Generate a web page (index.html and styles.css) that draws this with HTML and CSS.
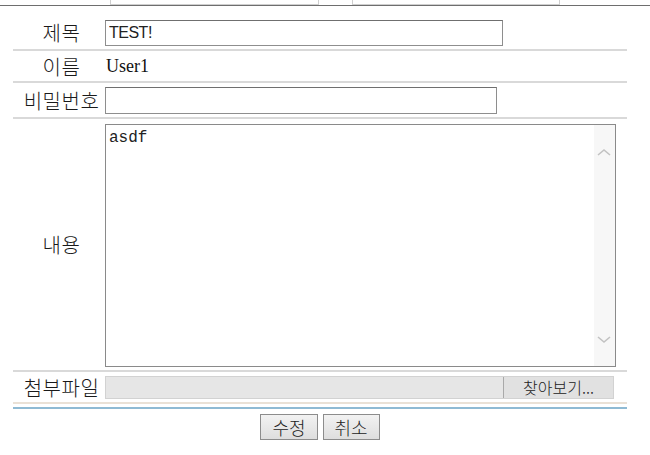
FILE: index.html
```html
<!DOCTYPE html>
<html lang="ko">
<head>
    <meta charset="UTF-8">
    <meta name="viewport" content="width=device-width, initial-scale=1.0">
    <title>글 수정</title>
    <link rel="stylesheet" href="styles.css">
</head>
<body>
    <div class="top-strip">
        <div class="top-box top-box-1"></div>
        <div class="top-box top-box-2"></div>
    </div>

    <form class="board-form" onsubmit="return false">
        <div class="row">
            <label class="label">제목</label>
            <div class="field"><input type="text" class="input input-title" value="TEST!"></div>
        </div>
        <div class="row row-name">
            <span class="label">이름</span>
            <div class="field"><span class="name-text">User1</span></div>
        </div>
        <div class="row">
            <label class="label">비밀번호</label>
            <div class="field"><input type="password" class="input input-pass"></div>
        </div>
        <div class="row">
            <label class="label">내용</label>
            <div class="field">
                <div class="content-box">
                    <textarea class="content-text">asdf</textarea>
                    <div class="scrollbar">
                        <svg width="20" height="12" viewBox="0 0 20 12"><path d="M4 9 L10 4 L16 9" fill="none" stroke="#c2c2c2" stroke-width="1.6"/></svg>
                        <svg width="20" height="12" viewBox="0 0 20 12"><path d="M4 3 L10 8 L16 3" fill="none" stroke="#c2c2c2" stroke-width="1.6"/></svg>
                    </div>
                </div>
            </div>
        </div>
        <div class="row row-file">
            <label class="label">첨부파일</label>
            <div class="field">
                <div class="file-box">
                    <span class="file-name"></span>
                    <button type="button" class="file-btn">찾아보기...</button>
                </div>
            </div>
        </div>

        <div class="actions">
            <button type="button" class="btn">수정</button>
            <button type="button" class="btn">취소</button>
        </div>
    </form>
</body>
</html>
```

FILE: styles.css
```css
* {
    margin: 0;
    padding: 0;
    box-sizing: border-box;
}

body {
    font-family: "Noto Sans CJK KR", "Liberation Sans", sans-serif;
    background: #fff;
    color: #222;
    width: 650px;
}

.top-strip {
    height: 6px;
    border-bottom: 1px solid #6e6e6e;
    display: flex;
    margin-bottom: 10px;
}

.top-box {
    height: 5px;
    border: 1px solid #cfcfcf;
    border-top: none;
}

.top-box-1 {
    width: 209px;
    margin-left: 110px;
}

.top-box-2 {
    width: 208px;
    margin-left: 33px;
}

.board-form {
    width: 614px;
    margin-left: 13px;
}

.row {
    display: grid;
    grid-template-columns: 92px 1fr;
    align-items: center;
    padding: 4px 0 3px;
    border-bottom: 2px solid #d9d9d9;
}

.label {
    font-size: 20px;
    font-weight: 300;
    text-align: center;
    padding-left: 5px;
    line-height: 22px;
    color: #1a1a1a;
    letter-spacing: 0.5px;
}

.field {
    display: flex;
    align-items: center;
}

.input {
    height: 26px;
    border: 1px solid #8e8e8e;
    border-top-color: #6f6f6f;
    font-family: "Liberation Sans", Arial, sans-serif;
    font-size: 16px;
    padding: 0 3px;
    color: #222;
    background: #fff;
    letter-spacing: -0.5px;
}

.input-title {
    width: 398px;
}

.input-pass {
    width: 392px;
    height: 27px;
}

.row-name {
    min-height: 32px;
}

.name-text {
    font-family: "Liberation Serif", "Times New Roman", serif;
    font-size: 18px;
    padding-left: 1px;
    color: #111;
}

.content-box {
    width: 511px;
    height: 243px;
    border: 1px solid #8a8a8a;
    display: flex;
    margin-top: 1px;
}

.content-text {
    flex: 1;
    border: none;
    resize: none;
    outline: none;
    font-family: "Liberation Mono", "Courier New", monospace;
    font-size: 16px;
    line-height: 18px;
    padding: 4px 3px;
    color: #222;
}

.scrollbar {
    width: 21px;
    background: #f7f7f7;
    display: flex;
    flex-direction: column;
    justify-content: space-between;
    padding: 21px 0 20px;
}

.file-box {
    width: 509px;
    height: 23px;
    background: #e6e6e6;
    border: 1px solid #d2d2d2;
    display: flex;
    justify-content: flex-end;
}

.file-btn {
    width: 110px;
    height: 21px;
    border: none;
    border-left: 1px solid #a9a9a9;
    background: #e1e1e1;
    font-family: "Noto Sans CJK KR", sans-serif;
    font-size: 16px;
    font-weight: 300;
    line-height: 21px;
    color: #222;
}

.row-file {
    border-bottom: 2px solid #eae1d6;
}

.actions {
    border-top: 2px solid #8fbad3;
    margin-top: 3px;
    padding-top: 5px;
    display: flex;
    justify-content: center;
    gap: 5px;
}

.btn {
    height: 26px;
    padding: 0 11px;
    border: 1px solid #8c8c8c;
    background: linear-gradient(#f2f2f2, #dedede);
    font-family: "Noto Sans CJK KR", sans-serif;
    font-size: 18px;
    font-weight: 300;
    line-height: 24px;
    color: #222;
    cursor: pointer;
}
```
